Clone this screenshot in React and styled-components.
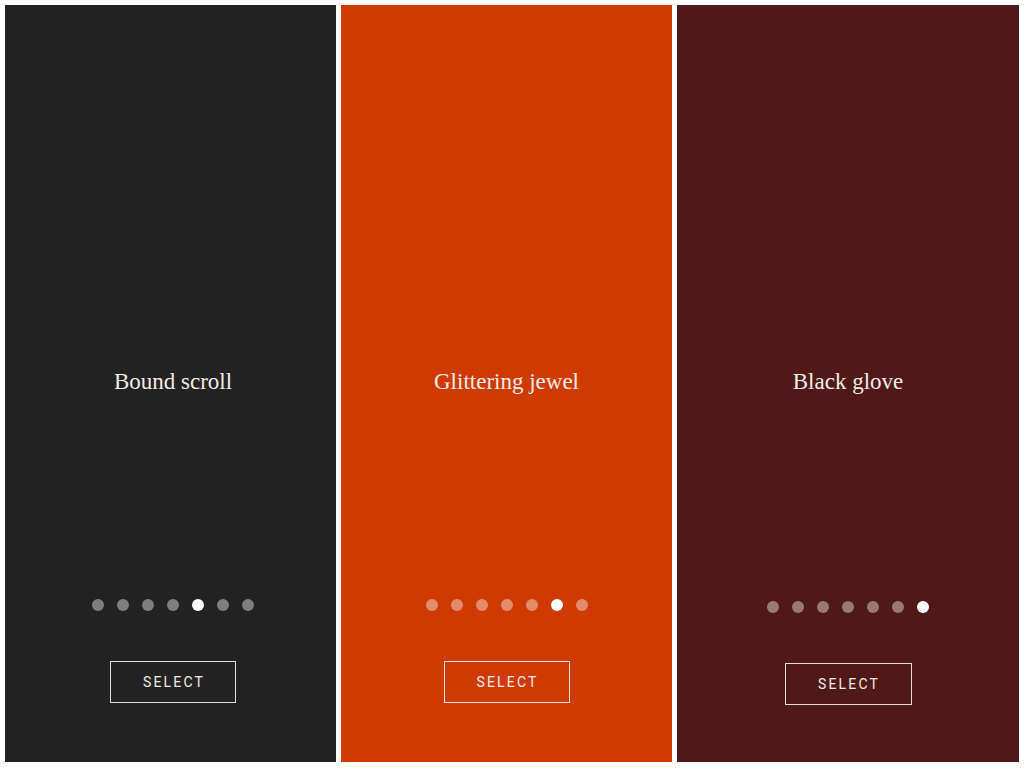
import React from "react";
import styled, { createGlobalStyle } from "styled-components";

const GlobalStyle = createGlobalStyle`
  html, body {
    margin: 0;
    padding: 0;
    background: #fff;
  }
  * {
    box-sizing: border-box;
  }
`;

const Board = styled.div`
  display: grid;
  grid-template-columns: 331px 331px 1fr;
  gap: 5px;
  padding: 5px 5px 6px;
  height: 768px;
`;

const Card = styled.section`
  display: grid;
  grid-template-rows: 1fr auto 1fr;
  padding-left: ${(props) => props.$inset || 0}px;
  background: ${(props) => props.$bg};
  color: #f1ece6;
`;

const Title = styled.h2`
  margin: 0 0 4px;
  text-align: center;
  font-family: "Liberation Serif", "DejaVu Serif", serif;
  font-weight: 400;
  font-size: 23px;
  line-height: 30px;
`;

const Footer = styled.div`
  display: flex;
  flex-direction: column;
  align-items: center;
  justify-content: flex-end;
  gap: 50px;
  padding-bottom: ${(props) => (props.$low ? "57px" : "59px")};
`;

const Dots = styled.div`
  display: flex;
  gap: 13px;
`;

const Dot = styled.span`
  width: 12px;
  height: 12px;
  border-radius: 50%;
  background: ${(props) => (props.$active ? "#fff" : "rgba(255,255,255,0.42)")};
`;

const SelectButton = styled.button`
  width: ${(props) => (props.$wide ? "127px" : "126px")};
  height: 42px;
  background: transparent;
  border: 1px solid rgba(255, 255, 255, 0.85);
  color: #f1ece6;
  font-family: Roboto, "Liberation Sans", sans-serif;
  font-size: 14px;
  letter-spacing: 2.2px;
  padding: 0 0 0 2px;
  cursor: pointer;
`;

const items = [
  { title: "Bound scroll", bg: "#222222", active: 4, inset: 5 },
  { title: "Glittering jewel", bg: "#cf3a00", active: 5 },
  { title: "Black glove", bg: "#511818", active: 6, last: true },
];

export default function App() {
  return (
    <>
      <GlobalStyle />
      <Board>
        {items.map((item) => (
          <Card key={item.title} $bg={item.bg} $inset={item.inset}>
            <div />
            <Title>{item.title}</Title>
            <Footer $low={item.last}>
              <Dots>
                {Array.from({ length: 7 }).map((_, i) => (
                  <Dot key={i} $active={i === item.active} />
                ))}
              </Dots>
              <SelectButton $wide={item.last}>SELECT</SelectButton>
            </Footer>
          </Card>
        ))}
      </Board>
    </>
  );
}
